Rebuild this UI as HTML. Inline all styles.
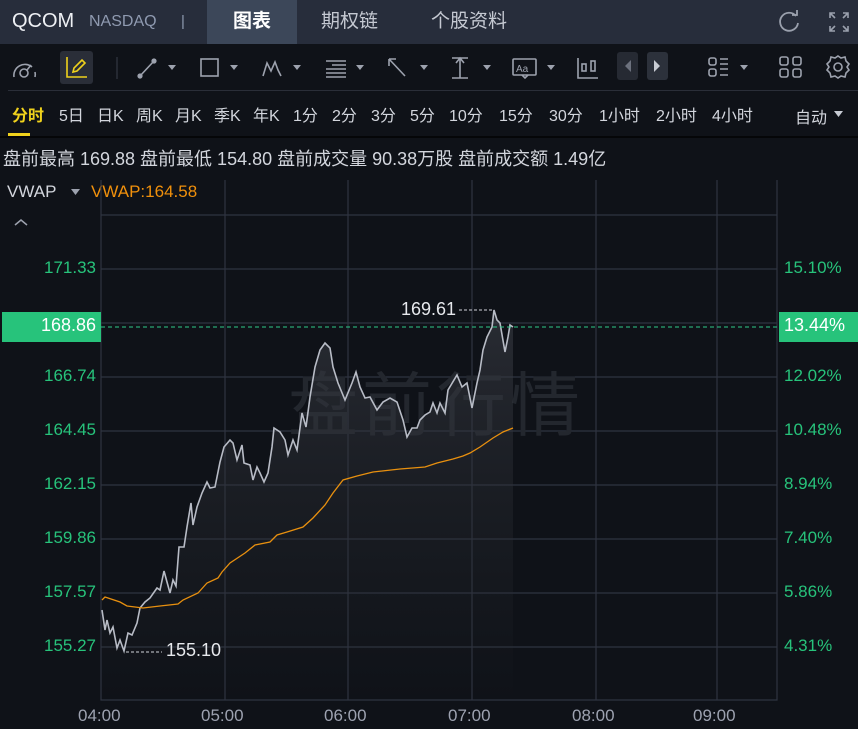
<!DOCTYPE html>
<html><head><meta charset="utf-8"><style>
*{margin:0;padding:0;box-sizing:border-box}
body{width:858px;height:729px;background:#0f1218;overflow:hidden;position:relative;font-family:"Liberation Sans","Noto Sans CJK SC",sans-serif;color:#d0d3da}
.a{position:absolute;white-space:nowrap}
#hdr{position:absolute;left:0;top:0;width:858px;height:44px;background:#272d3b}
.tab{position:absolute;top:0;height:44px;line-height:44px;font-size:19px;color:#c5c9d2}
.per{font-size:16px;color:#d3d6dd;top:102px}
.g{fill:none;stroke:#b8bcc6;stroke-width:1.6}
.yl{font-size:17px;color:#27c37b;right:762px}
.yr{font-size:17px;color:#27c37b;left:784px}
.xl{font-size:17px;color:#9da2b0;top:706px}
</style></head><body>
<div id="hdr"></div>
<div class="a" style="left:12px;top:10px;font-size:20px;color:#eef0f4">QCOM</div>
<div class="a" style="left:89px;top:13px;font-size:16px;color:#8f9ab0">NASDAQ</div>
<div class="a" style="left:181px;top:13px;font-size:15px;color:#8f9ab0">|</div>
<div class="tab" style="left:207px;width:90px;background:#3c4759;text-align:center;color:#fff;font-weight:bold">图表</div>
<div class="tab" style="left:321px">期权链</div>
<div class="tab" style="left:431px">个股资料</div>
<svg class="a" style="left:776px;top:9px" width="26" height="26" viewBox="0 0 26 26"><path d="M20 7A9 9 0 1 0 22 14" fill="none" stroke="#9aa0ad" stroke-width="1.8"/><path d="M16 6h5V1" fill="none" stroke="#9aa0ad" stroke-width="1.8"/></svg>
<svg class="a" style="left:828px;top:11px" width="22" height="22" viewBox="0 0 22 22" fill="none" stroke="#9aa0ad" stroke-width="1.6"><path d="M2 7V2h5M2 2l5 5M15 2h5v5M20 2l-5 5M2 15v5h5M2 20l5-5M20 15v5h-5M20 20l-5-5"/></svg>

<svg class="a" style="left:0;top:44px" width="858" height="48" viewBox="0 44 858 48">
<g fill="none" stroke="#9da2ae" stroke-width="1.6">
<path d="M14 77A11 11 0 0 1 32 67M35 72A11 11 0 0 1 35 77"/><circle cx="24" cy="73" r="4"/><path d="M27 70l4-5"/>
</g>
<rect x="60" y="51" width="33" height="33" rx="3" fill="#2a2e38"/>
<g fill="none" stroke="#f0d21c" stroke-width="1.6"><path d="M67 57v20h20"/><path d="M73 72l1-4 8-8 3 3-8 8z"/></g>
<path d="M117 57v22" stroke="#3a3f4a" stroke-width="1"/>
<g fill="none" stroke="#9da2ae" stroke-width="1.6">
<path d="M140 76l14-15"/><circle cx="140" cy="76" r="1.8" fill="#9da2ae"/><circle cx="154" cy="61" r="1.8" fill="#9da2ae"/>
<rect x="201" y="59" width="17" height="17"/>
<path d="M263 76l4-13 4 8 4-9 3 8 3 6"/>
<path d="M326 61h20M332 65h14M326 69h20M326 73h20M326 77h20"/>
<path d="M389 59l16 17M389 59v7M389 59h7"/>
<path d="M452 58h16M452 78h16M460 58v20M456 63l4-5 4 5"/>
<rect x="513" y="59" width="23" height="16" rx="1"/><path d="M522 75l3 3 3-3"/>
<path d="M578 58v20h20"/><rect x="582" y="64" width="4" height="7"/><rect x="591" y="61" width="4" height="10"/>
<rect x="709" y="58" width="7" height="7" rx="2"/><rect x="709" y="69" width="7" height="7" rx="2"/><path d="M720 59h8M720 64h8M720 69h8M720 75h8"/>
<rect x="780" y="57" width="8" height="8" rx="2"/><rect x="793" y="57" width="8" height="8" rx="2"/><rect x="780" y="69" width="8" height="8" rx="2"/><rect x="793" y="69" width="8" height="8" rx="2"/>
<circle cx="838" cy="67" r="4"/><path d="M838 56l3 2 4-1 1 4 3 3-2 3 2 3-3 3-1 4-4-1-3 2-3-2-4 1-1-4-3-3 2-3-2-3 3-3 1-4 4 1z"/>
</g>
<text x="516" y="72" font-size="10" fill="#9da2ae" font-family="Liberation Sans">Aa</text>
<g fill="#9da2ae"><path d="M168 65h8l-4 5z"/><path d="M230 65h8l-4 5z"/><path d="M293 65h8l-4 5z"/><path d="M356 65h8l-4 5z"/><path d="M420 65h8l-4 5z"/><path d="M483 65h8l-4 5z"/><path d="M547 65h8l-4 5z"/><path d="M740 65h8l-4 5z"/></g>
<rect x="617" y="52" width="21" height="28" rx="3" fill="#262a33"/><path d="M631 60v12l-6-6z" fill="#6c717d"/>
<rect x="647" y="52" width="21" height="28" rx="3" fill="#2c313b"/><path d="M654 60v12l6-6z" fill="#c8ccd4"/>
</svg>
<div class="a" style="left:8px;top:90px;width:850px;height:1px;background:#2a2e38"></div>
<div class="a per" style="left:12px;color:#f0d21c;font-weight:bold">分时</div>
<div class="a" style="left:8px;top:133px;width:22px;height:3px;background:#f0d21c"></div>
<div class="a per" style="left:59px">5日</div>
<div class="a per" style="left:97px">日K</div>
<div class="a per" style="left:136px">周K</div>
<div class="a per" style="left:175px">月K</div>
<div class="a per" style="left:214px">季K</div>
<div class="a per" style="left:253px">年K</div>
<div class="a per" style="left:293px">1分</div>
<div class="a per" style="left:332px">2分</div>
<div class="a per" style="left:371px">3分</div>
<div class="a per" style="left:410px">5分</div>
<div class="a per" style="left:449px">10分</div>
<div class="a per" style="left:499px">15分</div>
<div class="a per" style="left:549px">30分</div>
<div class="a per" style="left:599px">1小时</div>
<div class="a per" style="left:656px">2小时</div>
<div class="a per" style="left:712px">4小时</div>
<div class="a per" style="left:795px;top:104px">自动</div>
<svg class="a" style="left:834px;top:110px" width="10" height="8"><path d="M0 1h9l-4.5 6z" fill="#c8ccd4"/></svg>
<div class="a" style="left:0;top:136px;width:858px;height:2px;background:#050608"></div>
<div class="a" style="left:3px;top:145px;font-size:18px;color:#d3d6dd">盘前最高 169.88 盘前最低 154.80 盘前成交量 90.38万股 盘前成交额 1.49亿</div>
<div class="a" style="left:7px;top:182px;font-size:17px;color:#d3d6dd">VWAP</div>
<svg class="a" style="left:71px;top:189px" width="10" height="7"><path d="M0 0h9l-4.5 6z" fill="#9da2ae"/></svg>
<div class="a" style="left:91px;top:182px;font-size:17px;color:#f0900c">VWAP:164.58</div>
<svg class="a" style="left:14px;top:218px" width="14" height="9"><path d="M1 7l6-5 6 5" fill="none" stroke="#9da2ae" stroke-width="1.5"/></svg>

<svg class="a" style="left:0;top:0" width="858" height="729">
<defs><linearGradient id="f" x1="0" y1="310" x2="0" y2="700" gradientUnits="userSpaceOnUse"><stop offset="0" stop-color="#3a3d45" stop-opacity=".6"/><stop offset="0.6" stop-color="#2a2d33" stop-opacity=".3"/><stop offset="1" stop-color="#2a2d33" stop-opacity="0"/></linearGradient></defs>
<g stroke="#2f3440" stroke-width="1.2" fill="none">
<path d="M101 180V700H777V180"/>
<path d="M101 215H777M101 269H777M101 323H777M101 377H777M101 431H777M101 485H777M101 539H777M101 593H777M101 647H777"/>
<path d="M225 180V700M348 180V700M472 180V700M596 180V700M717 180V700"/>
</g>
<text x="288" y="430" font-size="70" fill="#23272e" font-family="Noto Sans CJK SC,sans-serif" letter-spacing="4">盘前行情</text>
<path d="M102 610L105 630L107 620L110 633L113 627L117 648L120 640L124 651L128 633L132 635L137 623L140 608L145 602L150 598L157 588L160 590L164 571L170 593L173 580L176 586L179 547L184 547L187 527L191 503L193 525L197 507L202 493L207 482L210 488L215 487L220 462L224 447L230 440L233 443L237 460L242 445L244 463L250 465L253 480L257 467L260 473L264 482L268 473L272 447L274 428L280 432L285 440L288 455L293 440L297 450L302 413L306 427L310 397L315 367L320 350L325 343L330 348L333 367L338 383L345 400L352 383L356 372L360 387L365 398L370 397L377 410L383 402L390 398L397 402L403 420L407 437L412 428L417 428L420 420L425 415L430 412L433 403L437 413L440 403L445 413L448 390L457 375L462 387L467 383L472 408L477 383L480 370L483 350L487 337L492 327L494 310L497 320L500 323L505 352L508 337L510 325L513 327L513 700L102 700Z" fill="url(#f)"/>
<path class="g" d="M102 610L105 630L107 620L110 633L113 627L117 648L120 640L124 651L128 633L132 635L137 623L140 608L145 602L150 598L157 588L160 590L164 571L170 593L173 580L176 586L179 547L184 547L187 527L191 503L193 525L197 507L202 493L207 482L210 488L215 487L220 462L224 447L230 440L233 443L237 460L242 445L244 463L250 465L253 480L257 467L260 473L264 482L268 473L272 447L274 428L280 432L285 440L288 455L293 440L297 450L302 413L306 427L310 397L315 367L320 350L325 343L330 348L333 367L338 383L345 400L352 383L356 372L360 387L365 398L370 397L377 410L383 402L390 398L397 402L403 420L407 437L412 428L417 428L420 420L425 415L430 412L433 403L437 413L440 403L445 413L448 390L457 375L462 387L467 383L472 408L477 383L480 370L483 350L487 337L492 327L494 310L497 320L500 323L505 352L508 337L510 325L513 327" stroke-width="1.2"/>
<path d="M102 600L105 597L120 602L127 606L143 608L160 606L178 604L183 600L198 593L207 583L218 578L222 572L230 563L245 553L255 545L270 542L277 535L287 532L303 527L313 518L325 505L333 493L343 480L357 476L373 472L400 469L425 467L437 463L453 459L463 456L470 453L480 447L493 438L503 432L513 428" fill="none" stroke="#e8900f" stroke-width="1.3"/>
<path d="M101 327H777" stroke="#2fc98a" stroke-width="1" stroke-dasharray="4 3"/>
<path d="M459 310H494M126 652H162" stroke="#d0d3da" stroke-width="1" stroke-dasharray="3 2"/>
</svg>
<div class="a" style="left:401px;top:299px;font-size:18px;color:#e6e8ec">169.61</div>
<div class="a" style="left:166px;top:640px;font-size:18px;color:#e6e8ec">155.10</div>

<div class="a" style="left:2px;top:312px;width:99px;height:30px;background:#27c37b"></div>
<div class="a" style="right:762px;top:315px;font-size:18px;color:#fff">168.86</div>
<div class="a" style="left:779px;top:312px;width:79px;height:30px;background:#27c37b"></div>
<div class="a" style="left:784px;top:315px;font-size:18px;color:#fff">13.44%</div>
<div class="a yl" style="top:258px">171.33</div>
<div class="a yl" style="top:366px">166.74</div>
<div class="a yl" style="top:420px">164.45</div>
<div class="a yl" style="top:474px">162.15</div>
<div class="a yl" style="top:528px">159.86</div>
<div class="a yl" style="top:582px">157.57</div>
<div class="a yl" style="top:636px">155.27</div>
<div class="a yr" style="top:258px">15.10%</div>
<div class="a yr" style="top:366px">12.02%</div>
<div class="a yr" style="top:420px">10.48%</div>
<div class="a yr" style="top:474px">8.94%</div>
<div class="a yr" style="top:528px">7.40%</div>
<div class="a yr" style="top:582px">5.86%</div>
<div class="a yr" style="top:636px">4.31%</div>
<div class="a xl" style="left:78px">04:00</div>
<div class="a xl" style="left:201px">05:00</div>
<div class="a xl" style="left:324px">06:00</div>
<div class="a xl" style="left:448px">07:00</div>
<div class="a xl" style="left:572px">08:00</div>
<div class="a xl" style="left:693px">09:00</div>
</body></html>
